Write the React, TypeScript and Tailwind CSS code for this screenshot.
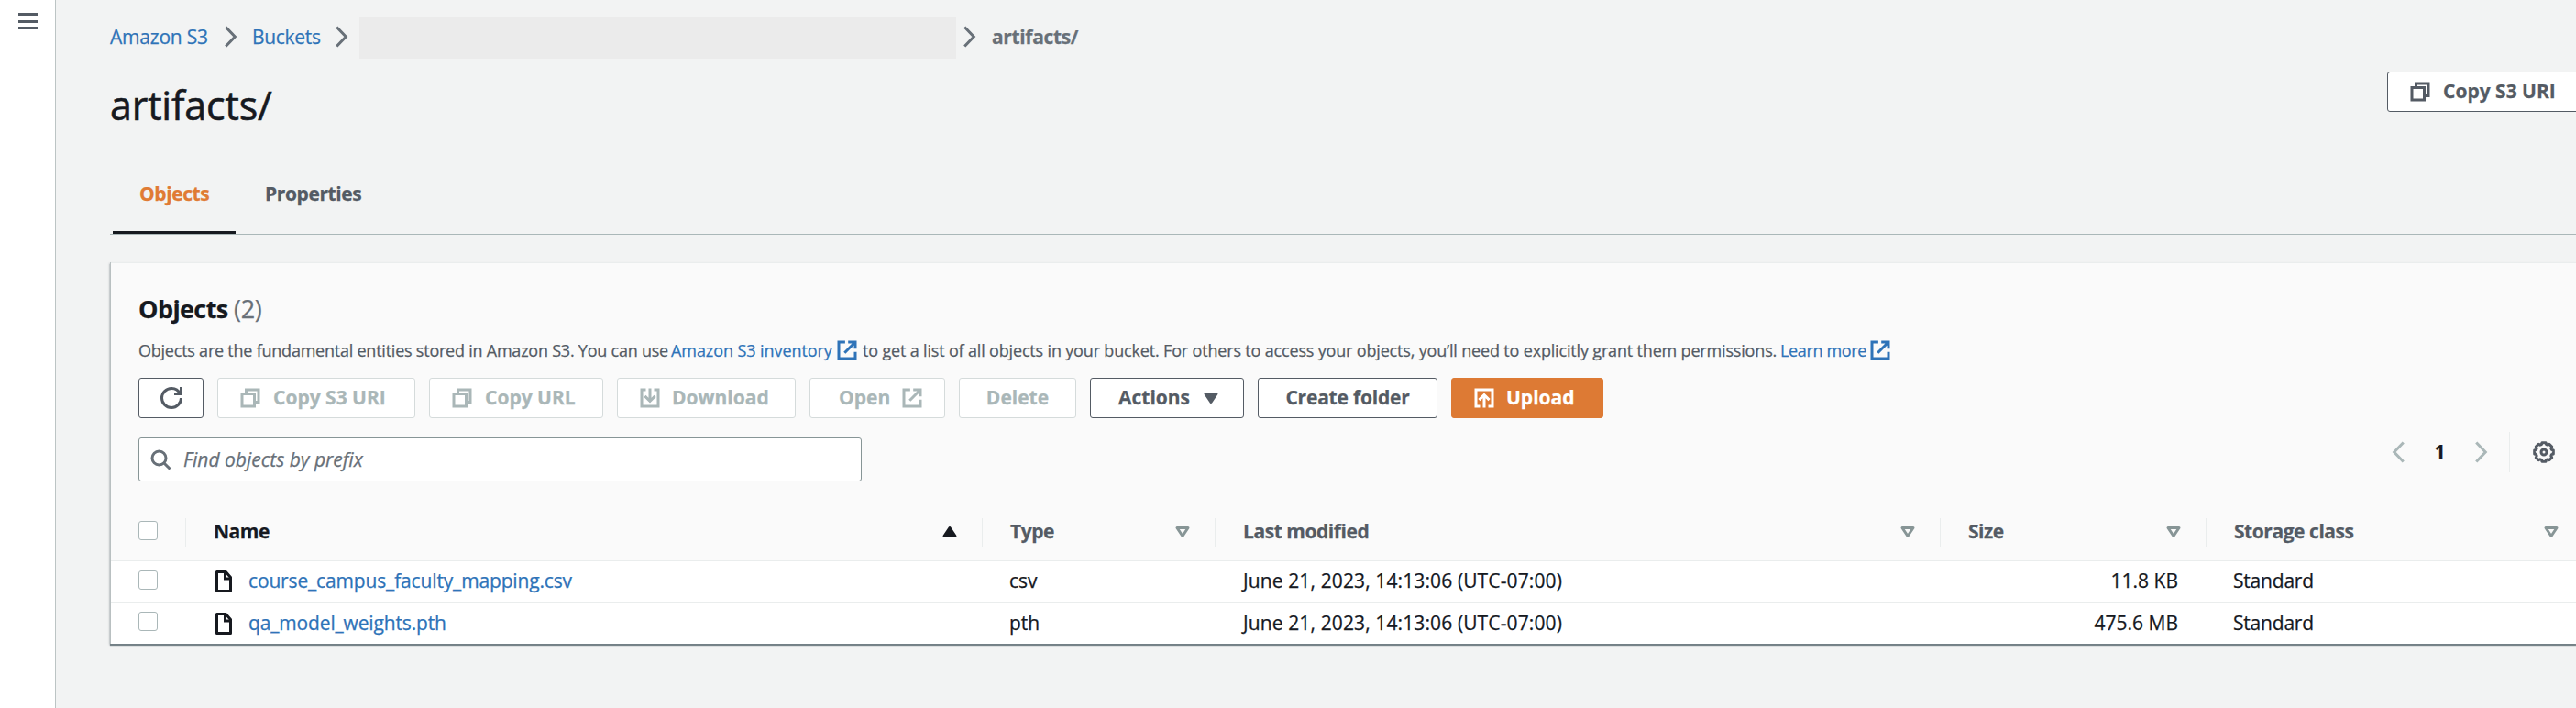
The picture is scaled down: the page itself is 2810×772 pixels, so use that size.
import type { ReactNode } from "react";

function Icon({ children, className = "" }: { children: ReactNode; className?: string }) {
  return (
    <svg
      viewBox="0 0 16 16"
      fill="none"
      stroke="currentColor"
      strokeWidth="2"
      className={`h-6 w-6 shrink-0 ${className}`}
    >
      {children}
    </svg>
  );
}

const CopyIcon = () => (
  <Icon>
    <path d="M2 5h9v9H2z" />
    <path d="M5 4V2h9v9h-2" />
  </Icon>
);

const ExternalIcon = () => (
  <Icon>
    <path d="M6.6 2H2v12h12V9.2M8.8 2H14v4.8M6.2 9.8 14 2" />
  </Icon>
);

const DownloadIcon = () => (
  <Icon>
    <path d="M5 2H2v12h12V2h-3M8 1v9.5M4.3 6.6 8 10.3l3.7-3.7" />
  </Icon>
);

const UploadIcon = () => (
  <Icon>
    <path d="M5 14H2V2h12v12h-3M8 15V5.5M4.3 9.4 8 5.7l3.7 3.7" />
  </Icon>
);

const RefreshIcon = () => (
  <Icon>
    <path d="M10 5h5V0" />
    <path d="M15 8a7 7 0 0 1-7 7 7 7 0 0 1-7-7 7 7 0 0 1 7-7 6.87 6.87 0 0 1 6.3 4" />
  </Icon>
);

const SearchIcon = () => (
  <Icon>
    <circle cx="7" cy="7" r="5" />
    <path d="m15 15-4.5-4.5" />
  </Icon>
);

const FileIcon = () => (
  <Icon className="text-[#16191f]">
    <path d="M3 1h6.5L13 5v10H3z" strokeLinejoin="round" />
    <path d="M9 1v5h4" />
  </Icon>
);

const gearPath =
  Array.from({ length: 8 }, (_, i) => {
    const at = (deg: number, r: number) => {
      const a = ((i * 45 + deg - 90) * Math.PI) / 180;
      return `${(8 + r * Math.cos(a)).toFixed(2)} ${(8 + r * Math.sin(a)).toFixed(2)}`;
    };
    return `${i === 0 ? "M" : "L"}${at(-11, 7)}L${at(11, 7)}L${at(17, 5.9)}L${at(28, 5.9)}`;
  }).join("") + "Z";

const GearIcon = () => (
  <Icon className="text-[#545b64]">
    <path d={gearPath} strokeLinejoin="round" />
    <circle cx="8" cy="8" r="2" />
  </Icon>
);

function Caret({ kind }: { kind: "up" | "down" | "hollow" }) {
  return (
    <Icon>
      <path
        d={kind === "up" ? "M12 11H4l4-6z" : "M4 5h8l-4 6z"}
        fill={kind === "hollow" ? "none" : "currentColor"}
        strokeLinejoin="round"
      />
    </Icon>
  );
}

function Angle({ left = false, className = "" }: { left?: boolean; className?: string }) {
  return (
    <svg
      viewBox="0 0 10 16"
      fill="none"
      stroke="currentColor"
      strokeWidth="2"
      className={`h-6 w-[15px] shrink-0 ${className}`}
    >
      <path d={left ? "M8.5 1 1.8 8l6.7 7" : "M1.5 1l6.7 7-6.7 7"} />
    </svg>
  );
}

function Button({
  label,
  before,
  after,
  tone = "disabled",
  className,
}: {
  label?: string;
  before?: ReactNode;
  after?: ReactNode;
  tone?: "disabled" | "normal" | "primary";
  className: string;
}) {
  const tones = {
    disabled: "border-[#d5dbdb] bg-white text-[#aab7b8]",
    normal: "border-[#545b64] bg-white text-[#545b64]",
    primary: "border-[#dd7a34] bg-[#dd7a34] text-white",
  };
  return (
    <button
      className={`flex h-11 shrink-0 items-center rounded-[3px] border ${tones[tone]} ${className}`}
    >
      {before}
      {label && <span className="pb-[2px] text-[21px] leading-[30px] font-bold">{label}</span>}
      {after}
    </button>
  );
}

const Checkbox = () => (
  <span className="mb-[4px] ml-[30px] block h-[21px] w-[21px] rounded-[3px] border-[1.5px] border-[#aab7b8] bg-white" />
);

function HeaderCell({
  label,
  kind = "hollow",
  className = "pr-[23px]",
}: {
  label: string;
  kind?: "up" | "hollow";
  className?: string;
}) {
  return (
    <div
      className={`flex h-[31px] items-center justify-between border-l border-[#eaeded] pl-[30px] ${className}`}
    >
      <span
        className={`pb-[2px] font-bold tracking-[-0.45px] ${kind === "up" ? "text-[#16191f]" : "text-[#545b64]"}`}
      >
        {label}
      </span>
      <span className={kind === "up" ? "text-[#16191f]" : "text-[#879596]"}>
        <Caret kind={kind} />
      </span>
    </div>
  );
}

const columns = "grid grid-cols-[81px_869px_254px_791px_290px_1fr] items-center";

const files = [
  { name: "course_campus_faculty_mapping.csv", type: "csv", size: "11.8 KB" },
  { name: "qa_model_weights.pth", type: "pth", size: "475.6 MB" },
];

export default function App() {
  return (
    <div className="flex h-[772px] w-full overflow-hidden bg-[#f2f3f3] font-['Open_Sans','Noto_Sans',sans-serif] text-[21px] leading-[30px] whitespace-nowrap text-[#16191f] [-webkit-text-stroke:0.25px]">
      <aside className="flex w-[61px] shrink-0 flex-col border-r border-[#bcc4c4] bg-white pt-[14px] pl-[20px]">
        <div className="flex h-[18px] w-[21px] flex-col justify-between">
          <span className="h-[3px] bg-[#545b64]" />
          <span className="h-[3px] bg-[#545b64]" />
          <span className="h-[3px] bg-[#545b64]" />
        </div>
      </aside>

      <main className="min-w-0 flex-1 pl-[59px]">
        <nav className="flex h-16 items-start pt-[18px] leading-[44px] text-[#687078]">
          <a className="w-[124px] tracking-[-0.2px] text-[#2e73b8]">Amazon S3</a>
          <Angle className="mt-[10px]" />
          <a className="ml-[16px] w-[90px] tracking-[-0.3px] text-[#2e73b8]">Buckets</a>
          <Angle className="mt-[10px]" />
          <span className="ml-[12px] h-[46px] w-[651px] bg-[#ebebeb]" />
          <Angle className="mt-[10px] ml-[7px]" />
          <span className="ml-[17px] font-bold tracking-[-0.35px]">artifacts/</span>
        </nav>

        <div className="flex h-[125px] items-start justify-between">
          <h1 className="mt-[21px] text-[43px] leading-[60px] tracking-[-0.15px] [-webkit-text-stroke:0.6px]">
            artifacts/
          </h1>
          <Button
            label="Copy S3 URI"
            before={<CopyIcon />}
            tone="normal"
            className="mt-[14px] -mr-3 w-[218px] gap-[13px] pl-[23px]"
          />
        </div>

        <div className="flex h-[67px] items-start border-b border-[#aab7b8] font-bold tracking-[-0.4px]">
          <span className="ml-[3px] h-[66px] w-[134px] border-b-[3px] border-[#16191f] pl-[29px] leading-[44px] text-[#e07b34]">
            Objects
          </span>
          <span className="ml-px h-[45px] w-px bg-[#aab7b8]" />
          <span className="ml-[30px] leading-[44px] text-[#545b64]">Properties</span>
        </div>

        <section className="mt-[30px] border-l border-[#b9c0c1] shadow-[0_2px_1px_rgba(60,78,86,0.65),-1px_1px_2px_rgba(0,28,36,0.15)]">
          <header className="h-[263px] border-t border-b border-[#eaeded] bg-[#fafafa] pt-[30px] pl-[30px]">
            <h2 className="text-[27px] leading-[40px] font-bold tracking-[-0.6px]">
              Objects <span className="font-normal tracking-[-0.3px] text-[#687078]">(2)</span>
            </h2>
            <p className="mt-[9px] flex h-8 items-center text-[18px] leading-8 text-[#545b64]">
              <span className="w-[581px] tracking-[-0.23px]">
                Objects are the fundamental entities stored in Amazon S3. You can use
              </span>
              <a className="flex w-[209px] items-center text-[#2e73b8]">
                <span className="w-[180px] tracking-[-0.08px]">Amazon S3 inventory</span>
                <ExternalIcon />
              </a>
              <span className="w-[1001px] tracking-[-0.17px]">
                to get a list of all objects in your bucket. For others to access your objects, you’ll need to
                explicitly grant them permissions.
              </span>
              <a className="flex items-center text-[#2e73b8]">
                <span className="w-[97px] tracking-[-0.35px]">Learn more</span>
                <ExternalIcon />
              </a>
            </p>

            <div className="mt-[14px] flex gap-[15px]">
              <Button before={<RefreshIcon />} tone="normal" className="w-[71px] justify-center" />
              <Button label="Copy S3 URI" before={<CopyIcon />} className="w-[216px] gap-[13px] pl-[23px]" />
              <Button label="Copy URL" before={<CopyIcon />} className="w-[190px] gap-[13px] pl-[23px]" />
              <Button label="Download" before={<DownloadIcon />} className="w-[195px] gap-3 pl-[23px]" />
              <Button
                label="Open"
                after={<ExternalIcon />}
                className="w-[148px] justify-between pr-[23px] pl-[31px]"
              />
              <Button label="Delete" className="w-[128px] justify-center" />
              <Button
                label="Actions"
                after={<Caret kind="down" />}
                tone="normal"
                className="w-[168px] justify-between pr-[23px] pl-[30px]"
              />
              <Button label="Create folder" tone="normal" className="w-[196px] justify-center tracking-[-0.2px]" />
              <Button
                label="Upload"
                before={<UploadIcon />}
                tone="primary"
                className="w-[166px] gap-3 pl-[23px]"
              />
            </div>

            <div className="flex items-start justify-between pr-[23px]">
              <div className="mt-[21px] flex h-12 w-[789px] items-center gap-[13px] rounded-[3px] border border-[#879596] bg-white pl-[11px] text-[#687078]">
                <SearchIcon />
                <span className="pb-[1px] italic">Find objects by prefix</span>
              </div>
              <div className="mt-[15px] flex h-11 items-center text-[#aab7b8]">
                <Angle left />
                <span className="w-[75px] pb-[2px] text-center font-bold text-[#16191f]">1</span>
                <Angle />
                <span className="ml-[23px] h-11 w-px bg-[#eaeded]" />
                <span className="ml-[25px]">
                  <GearIcon />
                </span>
              </div>
            </div>
          </header>

          <div className={`${columns} h-[63px] border-b border-[#eaeded] bg-[#fafafa]`}>
            <Checkbox />
            <HeaderCell label="Name" kind="up" />
            <HeaderCell label="Type" />
            <HeaderCell label="Last modified" />
            <HeaderCell label="Size" />
            <HeaderCell label="Storage class" className="pr-[15px]" />
          </div>

          {files.map((file) => (
            <div key={file.name} className={`${columns} h-[45px] border-b border-[#eaeded] bg-white last:border-b-0`}>
              <Checkbox />
              <div className="flex items-center gap-[15px] pl-[30px]">
                <FileIcon />
                <a className="pb-[2px] tracking-[-0.15px] text-[#2e73b8]">{file.name}</a>
              </div>
              <span className="pb-[2px] pl-[30px]">{file.type}</span>
              <span className="pb-[2px] pl-[31px] tracking-[0.12px]">June 21, 2023, 14:13:06 (UTC-07:00)</span>
              <span className="pr-[30px] pb-[2px] text-right">{file.size}</span>
              <span className="pb-[2px] pl-[30px] tracking-[-0.2px]">Standard</span>
            </div>
          ))}
        </section>
      </main>
    </div>
  );
}
